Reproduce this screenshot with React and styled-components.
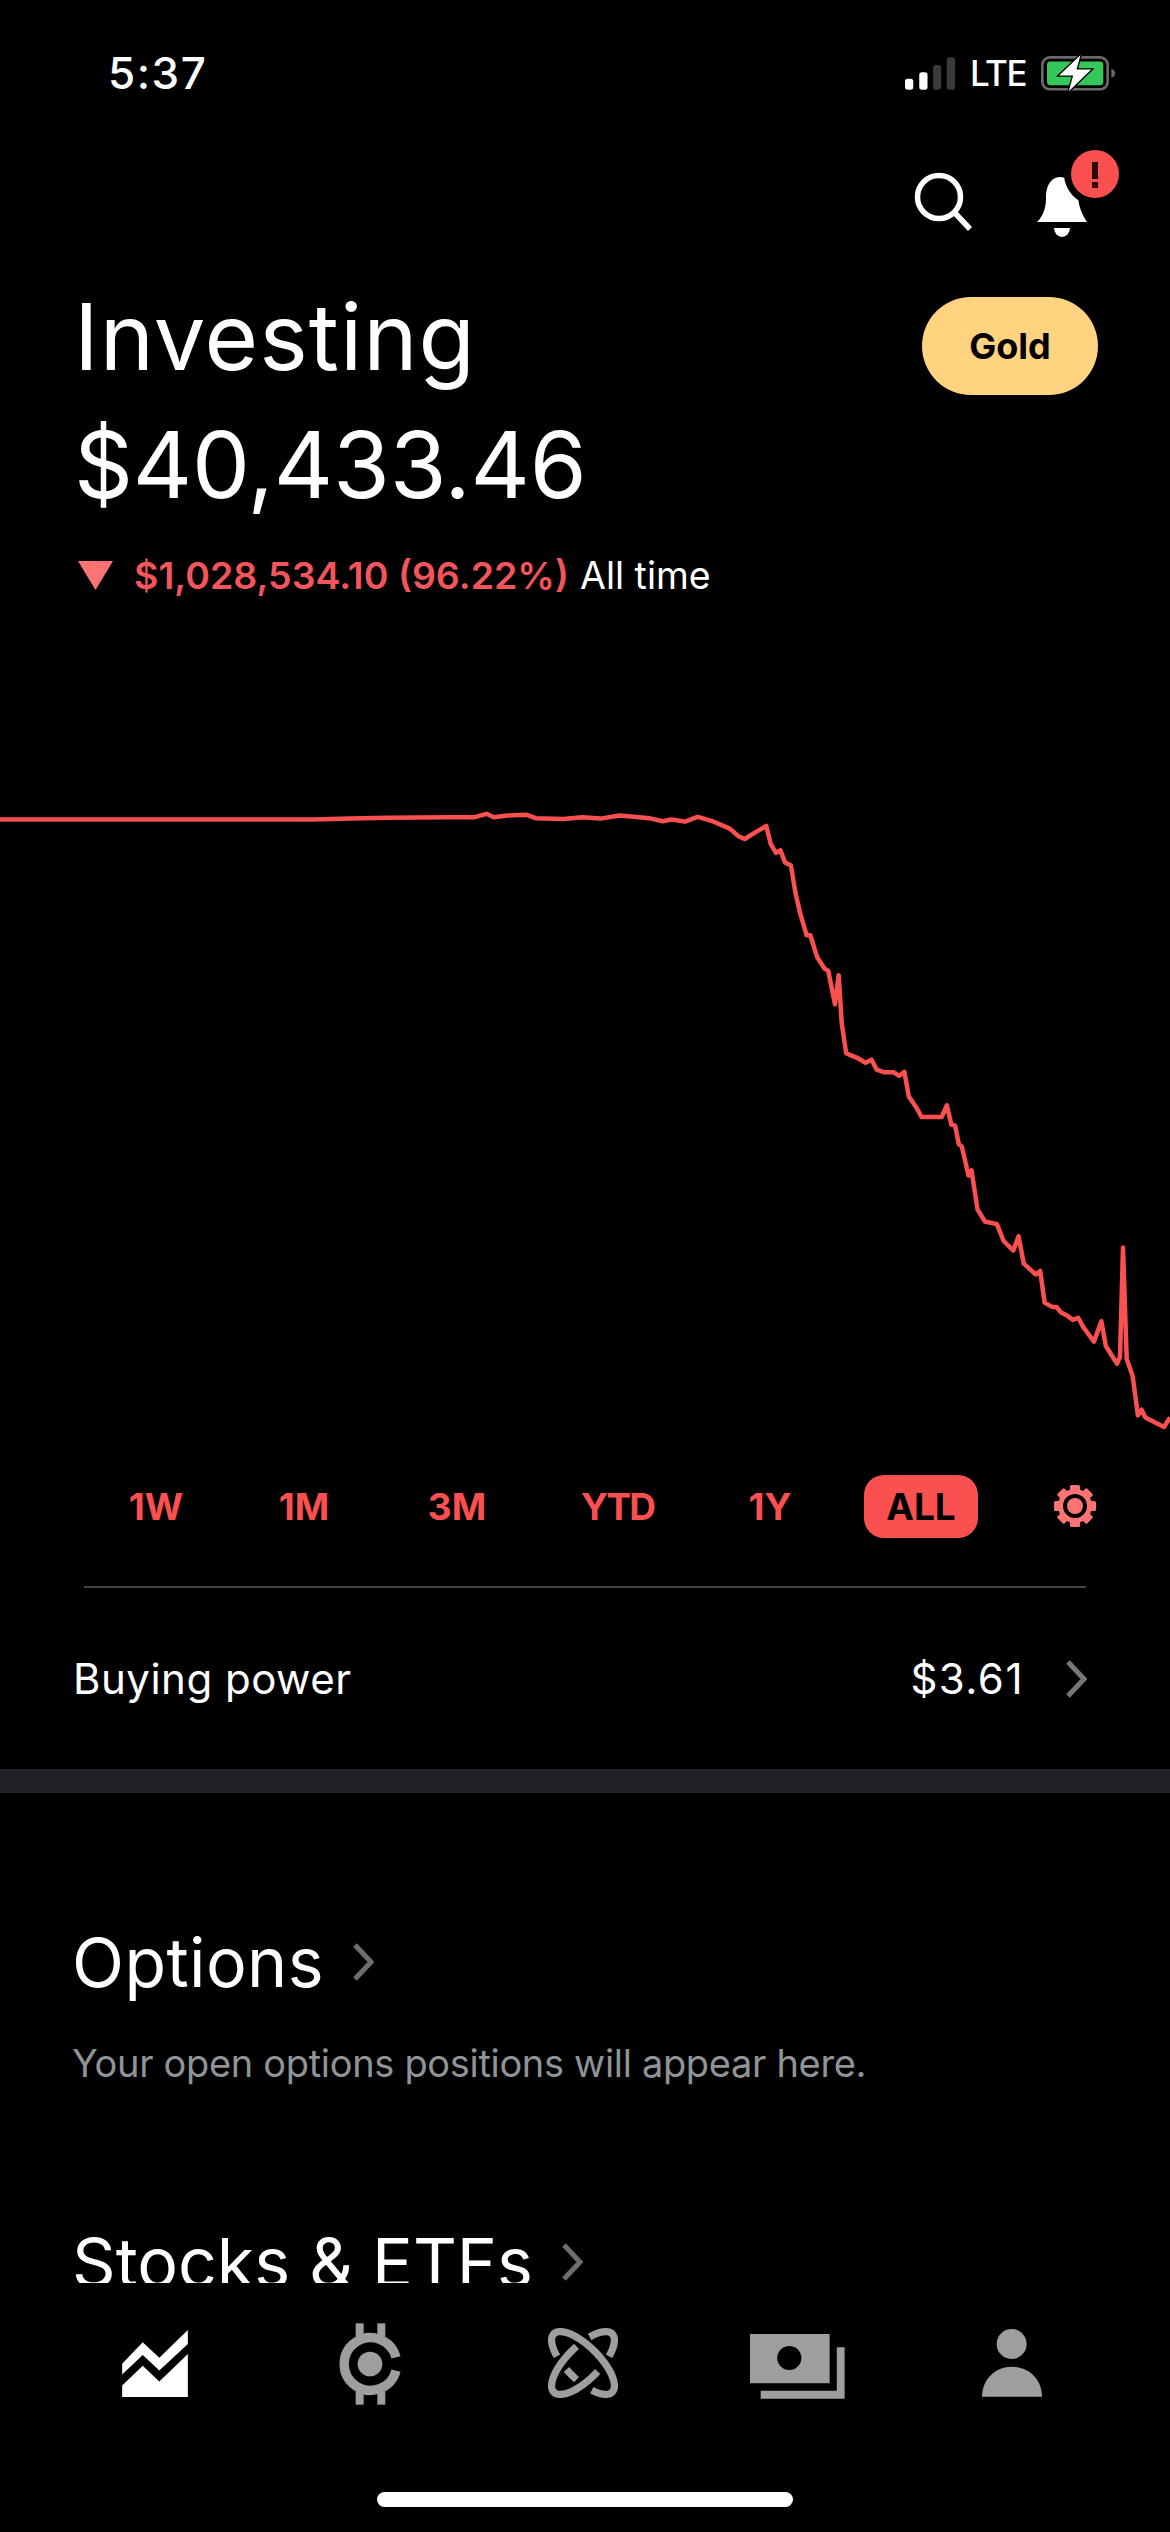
import React from "react";
import styled, { createGlobalStyle } from "styled-components";

const Global = createGlobalStyle`
  html, body { margin: 0; padding: 0; background: #000; }
  * { box-sizing: border-box; }
`;
const SANS = `Inter, "Liberation Sans", sans-serif`;
const RED = "#fb5050";
const GREY = "#9e9e9e";

const Screen = styled.div`
  width: 1170px; height: 2532px; background: #000; color: #fff;
  font-family: ${SANS}; display: flex; flex-direction: column; overflow: hidden;
`;
const Scroll = styled.main`
  height: 2283px; overflow: hidden; flex: none;
`;
const StatusBar = styled.div`
  height: 146px; padding: 0 55px 0 108px; display: flex; justify-content: space-between; align-items: center;
`;
const Clock = styled.span`
  font-size: 44px; font-weight: 500; line-height: 1; letter-spacing: 1.5px;
`;
const StatusRight = styled.div`
  display: flex; align-items: center; gap: 15px;
`;
const Lte = styled.span`
  font-size: 35px; font-weight: 500; line-height: 1; letter-spacing: -1.5px;
`;
const TopActions = styled.div`
  height: 127px; padding: 4px 48px 0 0; display: flex; justify-content: flex-end; align-items: flex-start; gap: 53px;
`;
const Header = styled.header`
  padding: 0 72px 0 74px; display: flex; justify-content: space-between; align-items: flex-start;
`;
const Title = styled.h1`
  margin: 0; font-size: 92px; font-weight: 400; line-height: 128px; letter-spacing: ${p => p.$ls}px;
`;
const GoldButton = styled.div`
  width: 176px; height: 98px; margin-top: 24px; border-radius: 49px; background: #ffd37f; color: #000;
  display: flex; align-items: center; justify-content: center; font-size: 36px; font-weight: 700;
`;
const Change = styled.div`
  display: flex; align-items: center; height: 56px; margin-top: 18px; padding-left: 78px; gap: 21px; font-size: 37.5px; white-space: nowrap;
`;
const ChangeValue = styled.span`
  color: #f2555a; font-weight: 600; margin-right: -10px;
`;
const ChartArea = styled.svg`
  display: block; width: 1170px; height: 680px; margin-top: 177px;
`;
const Ranges = styled.nav`
  height: 92px; padding: 0 60px 0 81px; display: flex; align-items: center;
`;
const RangeItem = styled.span`
  width: ${p => p.$w}px; height: 63px; flex: none; border-radius: 20px; display: flex; align-items: center; justify-content: center;
  margin-left: ${p => p.$ml || 0}px; letter-spacing: ${p => p.$ls || 0}px;
  font-size: 37px; font-weight: 700; color: ${p => (p.$active ? "#000" : RED)}; background: ${p => (p.$active ? RED : "transparent")};
`;
const Divider = styled.hr`
  margin: 34px 84px 0; height: 2px; border: 0; background: #444;
`;
const BuyingRow = styled.div`
  height: 181px; padding: 0 83px 0 73px; display: flex; align-items: center; font-size: 42px;
`;
const BuyingLabel = styled.span`
  flex: 1; letter-spacing: 0.5px;
`;
const BuyingValue = styled.span`
  letter-spacing: 1.5px;
`;
const Band = styled.div`
  height: 24px; background: #1f2124;
`;
const Section = styled.section`
  padding: 0 72px; margin-top: ${p => p.$mt}px;
`;
const SectionHead = styled.div`
  display: flex; align-items: center; gap: 28px; font-size: 68px; line-height: 84px; letter-spacing: ${p => p.$ls}px;
`;
const SectionNote = styled.p`
  margin: 36px 0 0; font-size: 38px; line-height: 46px; color: #8f9496; letter-spacing: -0.32px;
`;
const TabBar = styled.nav`
  height: 249px; flex: none; display: flex; flex-direction: column; align-items: center;
`;
const TabRow = styled.div`
  width: 100%; height: 209px; padding: 40px 0 0 122px; display: flex; align-items: flex-start;
`;
const Tab = styled.span`
  width: ${p => p.$w}px; flex: none; display: flex; margin-top: ${p => p.$mt}px;
`;
const HomeBar = styled.div`
  width: 416px; height: 15px; border-radius: 8px; background: #fff;
`;
const ActionIcon = styled.svg`
  display: block; margin-top: ${p => p.$mt || 0}px;
`;
const ChevronSvg = styled.svg`
  display: block; flex: none; margin-left: ${p => p.$ml || 0}px;
`;
const GearSvg = styled.svg`
  display: block; flex: none; margin-left: 74px;
`;

const pts = "0,91 420,91 470,89 520,87 600,86 635,86 652,78 662,86 680,82 705,80 718,88 755,90 780,86 805,89 830,82 850,85 870,88 888,95 900,91 918,96 935,85 955,95 978,112 990,130 998,136 1015,118 1027,106 1033,148 1040,168 1046,162 1052,190 1060,197 1066,260 1072,305 1081,358 1086,358 1095,408 1105,435 1110,440 1119,517 1124,450 1128,560 1134,630 1142,636 1148,640 1160,652 1168,645 1175,668 1185,674 1198,674 1205,682 1212,673 1218,730 1228,755 1235,777 1262,777 1269,750 1275,795 1280,797 1285,840 1289,845 1298,912 1302,900 1310,990 1320,1018 1336,1024 1345,1063 1358,1085 1365,1052 1372,1115 1388,1140 1394,1132 1400,1205 1410,1215 1416,1215 1422,1228 1430,1235 1438,1245 1445,1240 1452,1262 1466,1295 1476,1248 1482,1305 1497,1346 1501,1330 1505,1078 1510,1335 1518,1375 1525,1465 1530,1452 1535,1470 1560,1492 1568,1470";

const Chevron = ({ ml, color = "#777" }) => (
  <ChevronSvg $ml={ml} width={22} height={38} viewBox="0 0 22 38" fill="none">
    <path d="M3 2 L19 19 L3 36" stroke={color} strokeWidth="5" />
  </ChevronSvg>
);

const Signal = () => (
  <svg width="50" height="33" viewBox="82 52 151 98">
    <rect x="82" y="117" width="25" height="33" rx="8" fill="#fff" />
    <rect x="125" y="97" width="25" height="53" rx="8" fill="#fff" />
    <rect x="167" y="75" width="24" height="75" rx="8" fill="#3a3a3a" />
    <rect x="208" y="52" width="25" height="98" rx="8" fill="#3a3a3a" />
  </svg>
);

const Battery = () => (
  <svg width="74" height="37" viewBox="482 47 221 110">
    <rect x="486" y="54" width="195" height="95" rx="22" fill="none" stroke="#6a6a6a" strokeWidth="8" />
    <rect x="500" y="66" width="168" height="71" rx="10" fill="#34c759" />
    <path d="M692 88 Q703 92 703 101 Q703 110 692 115 Z" fill="#6a6a6a" />
    <path d="M600 47 L536 108 L578 108 L565 155 L632 90 L588 90 Z" fill="#fff" stroke="#000" strokeWidth="8" paintOrder="stroke" />
  </svg>
);

const Search = () => (
  <ActionIcon $mt={21} width="60" height="60" viewBox="0 0 60 60" fill="none">
    <circle cx="26" cy="26" r="21.5" stroke="#fff" strokeWidth="5.5" />
    <path d="M41 41 L57 58" stroke="#fff" strokeWidth="5.5" />
  </ActionIcon>
);

const Bell = () => (
  <ActionIcon width="96" height="90" viewBox="0 0 96 90" fill="none">
    <path d="M34 27 C22 28 20 40 20 48 C20 58 17 66 11 72 H61 C56 64 52 56 52 44 C52 36 44 27 34 27 Z" fill="#fff" />
    <path d="M28 78 H44 A8 9 0 0 1 28 78 Z" fill="#fff" />
    <circle cx="69" cy="24" r="31" fill="#000" />
    <circle cx="69" cy="24" r="24" fill={RED} />
    <rect x="66" y="12" width="6" height="17" fill="#2a0808" />
    <rect x="66" y="32" width="6" height="6" fill="#2a0808" />
  </ActionIcon>
);

const Gear = () => (
  <GearSvg width="46" height="46" viewBox="0 0 46 46">
    <g fill="#fb7373">
      {[0, 45, 90, 135, 180, 225, 270, 315].map(a => (
        <rect key={a} x="18" y="2" width="10" height="10" rx="1.5" transform={`rotate(${a} 23 23)`} />
      ))}
      <circle cx="23" cy="23" r="17" />
    </g>
    <circle cx="23" cy="23" r="12" fill="#000" />
    <circle cx="23" cy="23" r="8" fill="#fb7373" />
  </GearSvg>
);

const IconChart = () => (
  <svg width="66" height="67" viewBox="96 88 198 202" fill="#fff">
    <path d="M96 190 L158 125 L208 172 L294 88 V130 L208 210 L158 163 L96 222 Z" />
    <path d="M96 255 L158 196 L208 243 L294 160 V290 H96 Z" />
  </svg>
);
const IconWatch = () => (
  <svg width="62" height="82" viewBox="747 70 186 244" fill={GREY}>
    <rect x="797" y="70" width="24" height="40" />
    <rect x="862" y="70" width="24" height="40" />
    <rect x="797" y="274" width="24" height="40" />
    <rect x="862" y="274" width="24" height="40" />
    <path d="M918 172 A79 79 0 1 0 918 212" fill="none" stroke={GREY} strokeWidth="28" />
    <circle cx="840" cy="192" r="37" />
  </svg>
);

const arc = (mirror, t0, t1) => {
  const out = [];
  for (let t = t0; t <= t1; t += 4) {
    const r = (t * Math.PI) / 180;
    const a = 125 * Math.cos(r) * Math.SQRT1_2;
    const b = 50 * Math.sin(r) * Math.SQRT1_2;
    const x = a - b;
    const y = a + b;
    out.push(`${(145 + (mirror ? -x : x)).toFixed(1)},${(135 + y).toFixed(1)}`);
  }
  return `M${out.join(" L")}`;
};

const IconAtom = () => (
  <svg width="70" height="70" viewBox="39 29 212 212" fill="none" stroke={GREY} strokeWidth="22">
    <path d={arc(false, 124, 415)} />
    <path d={arc(false, 80, 102)} />
    <path d={arc(true, -100, 98)} />
    <path d={arc(true, 124, 236)} />
  </svg>
);
const IconCash = () => (
  <svg width="95" height="65" viewBox="645 102 266 195" preserveAspectRatio="none" fill={GREY}>
    <path fillRule="evenodd" d="M645 102 H868 V250 H645 Z M755 138 A34 36 0 1 0 755.1 138 Z" />
    <path d="M888 142 H910 V296 H675 V272 H888 Z" />
  </svg>
);
const IconPerson = () => (
  <svg width="60" height="68" viewBox="1294 88 168 204" preserveAspectRatio="none" fill={GREY}>
    <ellipse cx="1377" cy="133" rx="42" ry="45" />
    <path d="M1294 291 C1294 240 1330 201 1378 201 C1426 201 1462 240 1462 291 Z" />
  </svg>
);

export default function App() {
  return (
    <Screen>
      <Global />
      <Scroll>
        <StatusBar>
          <Clock>5:37</Clock>
          <StatusRight>
            <Signal />
            <Lte>LTE</Lte>
            <Battery />
          </StatusRight>
        </StatusBar>
        <TopActions>
          <Search />
          <Bell />
        </TopActions>
        <Header>
          <div>
            <Title $ls={1}>Investing</Title>
            <Title $ls={-0.2}>$40,433.46</Title>
          </div>
          <GoldButton>Gold</GoldButton>
        </Header>
        <Change>
          <svg width="35" height="29" viewBox="0 0 35 29"><path d="M0 0 H35 L17.5 29 Z" fill="#ff7373" /></svg>
          <ChangeValue>$1,028,534.10 (96.22%)</ChangeValue>
          <span>All time</span>
        </Change>
        <ChartArea viewBox="0 0 1568 1568" preserveAspectRatio="none" fill="none">
          <polyline points={pts} stroke={RED} strokeWidth="4.5" vectorEffect="non-scaling-stroke" strokeLinejoin="round" />
        </ChartArea>
        <Ranges>
          <RangeItem $w={150}>1W</RangeItem>
          <RangeItem $w={146}>1M</RangeItem>
          <RangeItem $w={160}>3M</RangeItem>
          <RangeItem $w={161} $ls={-2}>YTD</RangeItem>
          <RangeItem $w={144}>1Y</RangeItem>
          <RangeItem $w={114} $ml={22} $active>ALL</RangeItem>
          <Gear />
        </Ranges>
        <Divider />
        <BuyingRow>
          <BuyingLabel>Buying power</BuyingLabel>
          <BuyingValue>$3.61</BuyingValue>
          <Chevron ml={41} />
        </BuyingRow>
        <Band />
        <Section $mt={127}>
          <SectionHead $ls={0.4}>Options <Chevron color="#6b6f70" /></SectionHead>
          <SectionNote>Your open options positions will appear here.</SectionNote>
        </Section>
        <Section $mt={134}>
          <SectionHead $ls={0}>Stocks &amp; ETFs <Chevron color="#6b6f70" /></SectionHead>
        </Section>
      </Scroll>
      <TabBar>
        <TabRow>
          <Tab $w={217} $mt={7}><IconChart /></Tab>
          <Tab $w={209} $mt={0}><IconWatch /></Tab>
          <Tab $w={202} $mt={5}><IconAtom /></Tab>
          <Tab $w={232} $mt={11}><IconCash /></Tab>
          <Tab $w={60} $mt={6}><IconPerson /></Tab>
        </TabRow>
        <HomeBar />
      </TabBar>
    </Screen>
  );
}
